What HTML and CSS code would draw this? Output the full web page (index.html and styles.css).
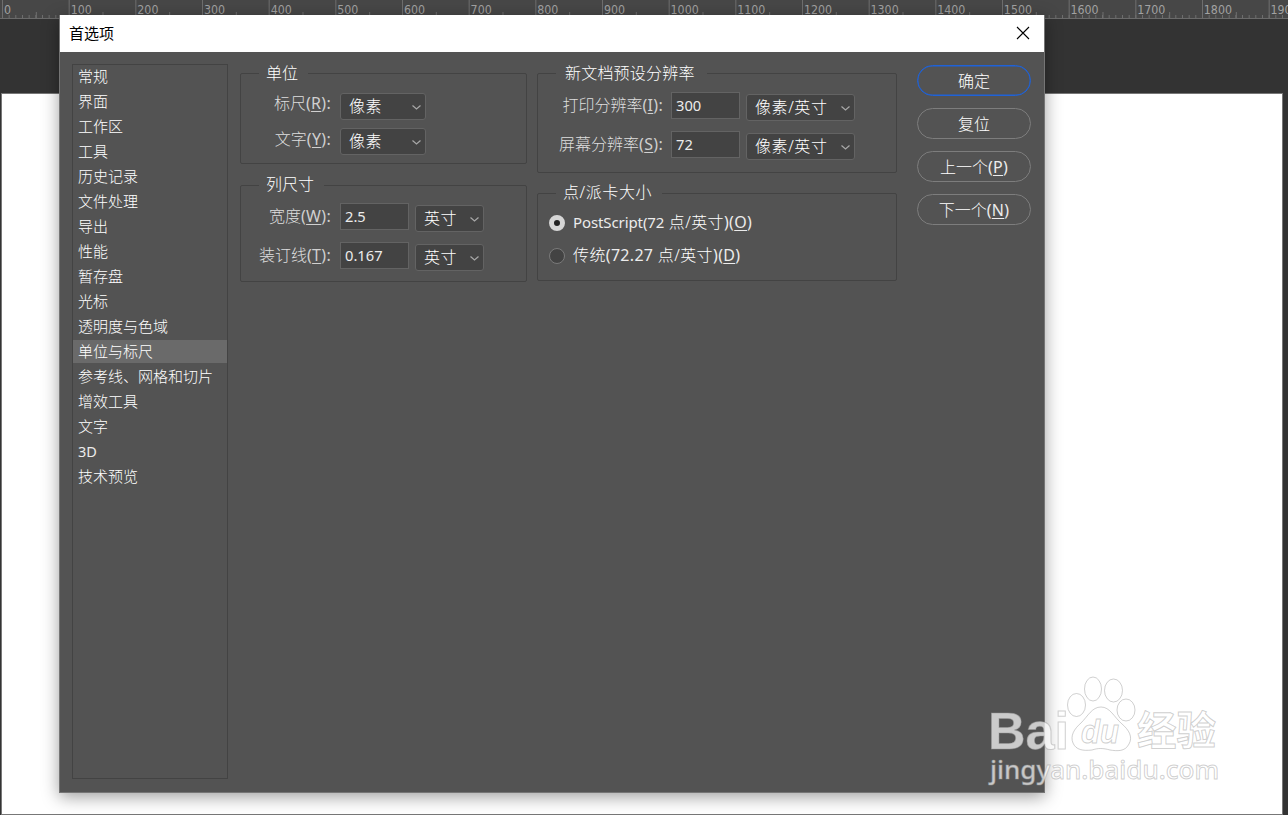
FILE: index.html
```
<!DOCTYPE html>
<html lang="zh-CN">
<head>
    <meta charset="utf-8">
    <title>首选项</title>
    <link rel="stylesheet" href="styles.css">
</head>
<body>
    <div class="ruler">
        <svg class="ticks" width="1288" height="18">
            <defs>
                <pattern id="minor" x="2" y="0" width="6.6667" height="18" patternUnits="userSpaceOnUse">
                    <rect x="0" y="15" width="1" height="3" fill="#6e6e6e"/>
                </pattern>
                <pattern id="major" x="2" y="0" width="66.6667" height="18" patternUnits="userSpaceOnUse">
                    <rect x="0" y="0" width="1" height="18" fill="#6e6e6e"/>
                    <rect x="34" y="12" width="1" height="6" fill="#6e6e6e"/>
                </pattern>
            </defs>
            <rect x="2" width="1286" height="18" fill="url(#minor)"/>
            <rect x="2" width="1286" height="18" fill="url(#major)"/>
        </svg>
        <div class="numbers">
            <span>0</span><span>100</span><span>200</span><span>300</span><span>400</span><span>500</span><span>600</span><span>700</span><span>800</span><span>900</span><span>1000</span><span>1100</span><span>1200</span><span>1300</span><span>1400</span><span>1500</span><span>1600</span><span>1700</span><span>1800</span><span>1900</span>
        </div>
    </div>
    <div class="canvas"></div>

    <div class="dialog">
        <div class="titlebar">
            <span>首选项</span>
            <svg width="14" height="14" viewBox="0 0 14 14"><path d="M1 1L13 13M13 1L1 13" stroke="#000" stroke-width="1.1"/></svg>
        </div>
        <div class="content">
            <ul class="list">
                <li>常规</li>
                <li>界面</li>
                <li>工作区</li>
                <li>工具</li>
                <li>历史记录</li>
                <li>文件处理</li>
                <li>导出</li>
                <li>性能</li>
                <li>暂存盘</li>
                <li>光标</li>
                <li>透明度与色域</li>
                <li class="selected">单位与标尺</li>
                <li>参考线、网格和切片</li>
                <li>增效工具</li>
                <li>文字</li>
                <li class="latin">3D</li>
                <li>技术预览</li>
            </ul>

            <div class="column left">
                <fieldset class="units">
                    <legend>单位</legend>
                    <div class="row">
                        <label class="up">标尺<span class="key">(<u>R</u>):</span></label>
                        <div class="select">像素<svg class="arrow" viewBox="0 0 9 5"><path d="M.5 .5L4.5 4L8.5 .5"/></svg></div>
                    </div>
                    <div class="row">
                        <label>文字<span class="key">(<u>Y</u>):</span></label>
                        <div class="select">像素<svg class="arrow" viewBox="0 0 9 5"><path d="M.5 .5L4.5 4L8.5 .5"/></svg></div>
                    </div>
                </fieldset>
                <fieldset class="sizes">
                    <legend>列尺寸</legend>
                    <div class="row">
                        <label>宽度<span class="key">(<u>W</u>):</span></label>
                        <div class="input">2.5</div>
                        <div class="select">英寸<svg class="arrow" viewBox="0 0 9 5"><path d="M.5 .5L4.5 4L8.5 .5"/></svg></div>
                    </div>
                    <div class="row">
                        <label>装订线<span class="key">(<u>T</u>):</span></label>
                        <div class="input">0.167</div>
                        <div class="select">英寸<svg class="arrow" viewBox="0 0 9 5"><path d="M.5 .5L4.5 4L8.5 .5"/></svg></div>
                    </div>
                </fieldset>
            </div>

            <div class="column right">
                <fieldset class="resolution">
                    <legend>新文档预设分辨率</legend>
                    <div class="row">
                        <label>打印分辨率<span class="key">(<u>I</u>):</span></label>
                        <div class="input">300</div>
                        <div class="select">像素/英寸<svg class="arrow" viewBox="0 0 9 5"><path d="M.5 .5L4.5 4L8.5 .5"/></svg></div>
                    </div>
                    <div class="row">
                        <label>屏幕分辨率<span class="key">(<u>S</u>):</span></label>
                        <div class="input">72</div>
                        <div class="select">像素/英寸<svg class="arrow" viewBox="0 0 9 5"><path d="M.5 .5L4.5 4L8.5 .5"/></svg></div>
                    </div>
                </fieldset>
                <fieldset class="points">
                    <legend>点/派卡大小</legend>
                    <div class="option"><i class="radio checked"></i><span><span class="latin">PostScript(72</span> 点/英寸<span class="key">)(<u>O</u>)</span></span></div>
                    <div class="option"><i class="radio"></i><span>传统<span class="key">(72.27</span> 点/英寸<span class="key">)(<u>D</u>)</span></span></div>
                </fieldset>
            </div>

            <div class="buttons">
                <div class="button primary">确定</div>
                <div class="button">复位</div>
                <div class="button">上一个<span class="key">(<u>P</u>)</span></div>
                <div class="button">下一个<span class="key">(<u>N</u>)</span></div>
            </div>
        </div>
    </div>

    <svg class="watermark" width="248" height="125" viewBox="0 0 248 125">
        <g class="mark">
            <text x="8" y="79" class="logo" textLength="81" lengthAdjust="spacingAndGlyphs">Bai</text>
            <ellipse cx="96.5" cy="35" rx="9" ry="11.5"/>
            <ellipse cx="113" cy="19" rx="8.5" ry="12"/>
            <ellipse cx="133.5" cy="20.5" rx="9" ry="11.5"/>
            <ellipse cx="146" cy="40" rx="9" ry="11"/>
            <path d="M121 37C130 37 134 47 142 54C149 60 153 67 149 74C145 82 137 81 130 80C123 78 118 78 112 80C103 81 96 80 93 73C90 66 94 59 101 53C108 46 112 37 121 37Z"/>
            <text x="101" y="73" class="du" textLength="38" lengthAdjust="spacingAndGlyphs">du</text>
            <text x="157" y="75" class="cn" textLength="79" lengthAdjust="spacingAndGlyphs">经验</text>
            <text x="10" y="109" class="site" textLength="229" lengthAdjust="spacingAndGlyphs">jingyan.baidu.com</text>
        </g>
    </svg>
</body>
</html>
```

FILE: styles.css
```
* {
    box-sizing: border-box;
}
body {
    margin: 0;
    height: 815px;
    position: relative;
    overflow: hidden;
    background: #333;
    color: #fff;
    font-family: "Noto Sans", "Noto Sans CJK SC", sans-serif;
    font-size: 16px;
    font-weight: 300;
}
.ruler {
    height: 19px;
    background: #474747;
    border-bottom: 1px solid #6a6a6a;
    position: relative;
}
.ticks {
    position: absolute;
    left: 0;
    top: 0;
    shape-rendering: crispEdges;
}
.numbers {
    position: relative;
    display: flex;
    width: 1340px;
    padding-left: 4px;
    font: 12.3px/20px "DejaVu Sans Condensed", "DejaVu Sans", sans-serif;
    color: #a2a2a2;
}
.numbers span {
    flex: 0 0 66.667px;
}
.canvas {
    width: 1282px;
    height: 722px;
    margin: 74px 0 0 1px;
    background: #fff;
    border: 1px solid #777;
}

/* preferences window */
.dialog {
    position: absolute;
    left: 59px;
    top: 15px;
    width: 986px;
    height: 778px;
    background: #535353;
    border: 1px solid #757575;
    border-top: none;
    box-shadow: 0 4px 16px rgba(0, 0, 0, 0.38);
}
.titlebar {
    display: flex;
    justify-content: space-between;
    align-items: center;
    height: 37px;
    padding: 0 14px 1px 9px;
    background: #fff;
    color: #000;
    font-size: 15px;
    font-weight: 400;
}
.titlebar span {
    padding-bottom: 2px;
}
.content {
    display: flex;
    align-items: flex-start;
    padding-left: 12px;
}
.list {
    width: 156px;
    height: 715px;
    margin: 12px 12px 0 0;
    padding: 0;
    border: 1px solid #434343;
    list-style: none;
    font-size: 15px;
}
.list li {
    height: 23px;
    margin-bottom: 2px;
    padding-left: 5px;
    line-height: 22px;
    white-space: nowrap;
}
.list .selected {
    background: #6a6a6a;
}
.list .latin {
    line-height: 23px;
    font-size: 14.5px;
}
.latin,
.key {
    font-size: 15px;
    font-weight: 400;
    color: #ececec;
}
.key {
    font-size: 16px;
    letter-spacing: 0.3px;
}
.column {
    display: flex;
    flex-direction: column;
    padding-top: 11px;
}
.left {
    width: 287px;
    gap: 11px;
    margin-right: 10px;
}
.right {
    width: 360px;
    gap: 10px;
    margin-right: 20px;
}
fieldset {
    min-width: 0;
    margin: 0;
    padding: 0;
    border: 1px solid #434343;
    border-radius: 2px;
}
legend {
    height: 21px;
    margin-left: 18px;
    padding: 0 10px 0 7px;
    line-height: 20px;
}
.sizes legend,
.points legend {
    line-height: 19px;
}
.row {
    display: flex;
}
label {
    width: 90px;
    line-height: 27px;
    text-align: right;
    white-space: nowrap;
    color: #dedede;
    flex: none;
}
label .key {
    color: #d0d0d0;
}
u {
    text-underline-offset: 2px;
    text-decoration-thickness: 1px;
}
.select,
.input {
    height: 27px;
    background: #434343;
    border: 1px solid #636363;
    line-height: 25px;
    white-space: nowrap;
}
.select {
    display: flex;
    justify-content: space-between;
    align-items: center;
    padding: 0 4px 0 8px;
    border-radius: 3px;
    letter-spacing: 0.6px;
}
.input {
    width: 69px;
    padding-left: 4px;
    font-size: 14.7px;
    font-weight: 400;
    color: #ececec;
}
.arrow {
    width: 9px;
    height: 5px;
    margin-top: 2px;
    fill: none;
    stroke: #a8a8a8;
    stroke-width: 1.2;
}
.units {
    height: 101px;
}
.units .row {
    height: 27px;
    margin: 9px 0 -1px;
}
.units .select {
    width: 86px;
    margin-left: 9px;
}
.units label {
    line-height: 23px;
}
.units .up {
    line-height: 21px;
}
.sizes {
    height: 107px;
    padding-top: 7px;
}
.resolution {
    height: 110px;
    padding-top: 8px;
}
.sizes .row,
.resolution .row {
    height: 29px;
    margin-bottom: 10px;
}
.sizes .select,
.resolution .select {
    margin: 2px 0 0 6px;
}
.sizes .input {
    margin-left: 9px;
}
.sizes .select {
    width: 69px;
}
.resolution legend {
    padding: 0 12px 0 9px;
    letter-spacing: 0.2px;
}
.resolution label {
    width: 125px;
}
.resolution .input {
    margin-left: 8px;
}
.resolution .select {
    width: 109px;
}
.points {
    height: 98px;
    padding-top: 3px;
}
.points legend {
    letter-spacing: 0.6px;
}
.option {
    display: flex;
    align-items: center;
    height: 33px;
    padding-left: 11px;
    gap: 8px;
    white-space: nowrap;
}
.option > span {
    padding-bottom: 5px;
    letter-spacing: 0.4px;
}
.option .latin {
    letter-spacing: -0.1px;
}
.radio {
    width: 16px;
    height: 16px;
    margin-top: -2px;
    border: 1px solid #7a7a7a;
    border-radius: 50%;
    background: #434343;
}
.checked {
    border: 5px solid #d6d6d6;
    background: #222;
}
.buttons {
    display: flex;
    flex-direction: column;
    gap: 12px;
    padding-top: 13px;
}
.button {
    width: 114px;
    height: 31px;
    border: 1px solid #7d7d7d;
    border-radius: 16px;
    line-height: 30px;
    text-align: center;
}
.primary {
    border-color: #1f62d8;
    box-shadow: inset 0 0 0 0.4px #1f62d8;
}

.watermark {
    position: absolute;
    left: 980px;
    top: 670px;
}
.mark {
    fill: rgba(255, 255, 255, 0.7);
    stroke: rgba(150, 150, 150, 0.45);
    stroke-width: 1;
}
.logo {
    font: bold 52px "Liberation Sans", sans-serif;
}
.du {
    font: italic bold 33px "Liberation Sans", sans-serif;
}
.cn {
    font: bold 40px "Noto Sans CJK SC", sans-serif;
}
.site {
    font: 500 26px "Noto Sans", sans-serif;
}
```
